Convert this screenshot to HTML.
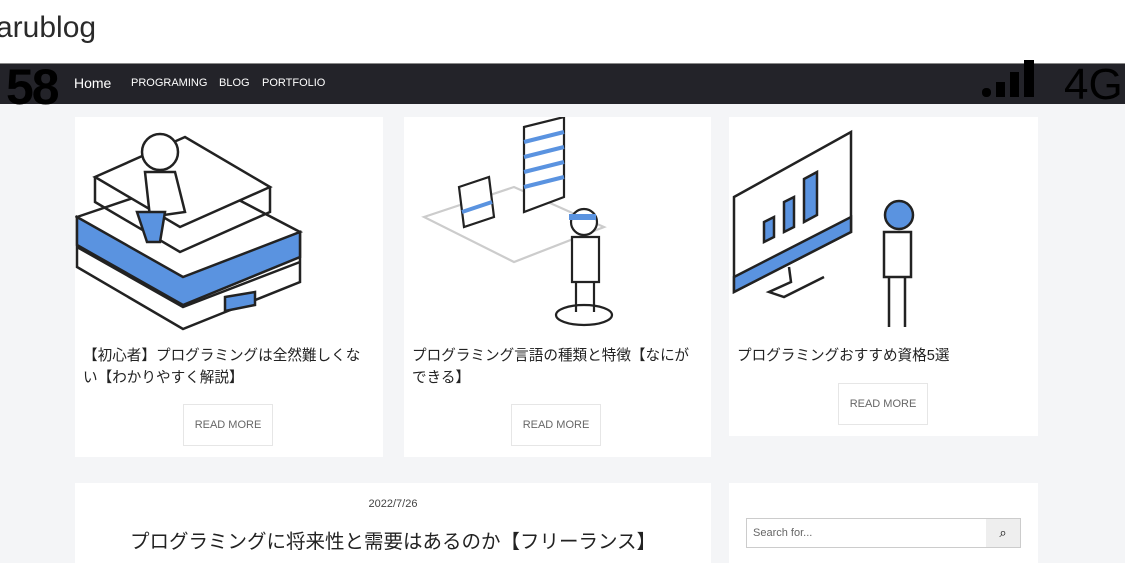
<!DOCTYPE html>
<html><head><meta charset="utf-8"><style>
*{margin:0;padding:0;box-sizing:border-box}
body{width:1125px;height:543px;overflow:hidden;background:#f4f5f7;font-family:"Liberation Sans","Noto Sans CJK JP",sans-serif;position:relative}
.top{position:absolute;left:0;top:0;width:1125px;height:63px;background:#fff}
.logo{position:absolute;left:-4px;top:11px;font-size:30px;color:#2a2a2a}
.nav{position:absolute;left:0;top:63px;width:1125px;height:41px;background:#232329;border-top:1px solid #888}
.nav .n58{position:absolute;left:6px;top:-6px;font-size:50px;color:#000;font-weight:bold;letter-spacing:-2px}
.nav .m{position:absolute;top:13px;color:#fff;font-size:11px}
.g4{position:absolute;left:1064px;top:-4px;font-size:44px;color:#000}
.card{position:absolute;background:#fff}
.t{position:absolute;left:8px;font-size:14.6px;line-height:22px;color:#222}
.btn{position:absolute;width:90px;height:42px;border:1px solid #e6e6e6;font-size:11px;color:#666;text-align:center;line-height:40px}
svg{position:absolute}
</style></head><body>
<div class="top"><div class="logo">arublog</div></div>
<div class="nav"><div class="n58">58</div>
<span class="m" style="left:74px;font-size:14px;top:11px">Home</span>
<span class="m" style="left:131px">PROGRAMING</span>
<span class="m" style="left:219px">BLOG</span>
<span class="m" style="left:262px">PORTFOLIO</span>
<svg style="left:982px;top:-6px" width="66" height="44"><rect x="0" y="30" width="9" height="9" rx="4" fill="#000"/><rect x="14" y="24" width="9" height="15" fill="#000"/><rect x="28" y="14" width="9" height="25" fill="#000"/><rect x="42" y="2" width="10" height="37" fill="#000"/></svg>
<div class="g4">4G</div></div>

<div class="card" style="left:75px;top:117px;width:308px;height:340px">
<svg width="308" height="220" viewBox="0 0 308 220" fill="none" stroke="#222" stroke-width="2.5">
<path d="M2 100 L120 60 L225 115 L108 160 Z" fill="#fff"/><path d="M2 100 L2 150 L108 212 L225 165 L225 115" fill="#fff"/><path d="M2 130 L108 190 L225 145"/>
<path d="M2 100 L108 160 L225 115 L225 140 L108 188 L2 128Z" fill="#5a93e0"/>
<path d="M20 60 L110 20 L195 70 L105 110Z" fill="#fff"/><path d="M20 60 L20 85 L105 135 L195 95 L195 70"/>
<path d="M150 180 L180 175 L180 188 L150 194Z" fill="#5a93e0"/>
<circle cx="85" cy="35" r="18" fill="#fff"/><path d="M70 55 L100 55 L110 95 L75 100Z" fill="#fff"/><path d="M62 95 L90 95 L85 125 L72 125Z" fill="#5a93e0"/>
</svg>
<div class="t" style="top:228px">【初心者】プログラミングは全然難しくな<br>い【わかりやすく解説】</div>
<div class="btn" style="left:108px;top:287px">READ MORE</div></div>

<div class="card" style="left:404px;top:117px;width:307px;height:340px">
<svg width="307" height="220" viewBox="0 0 307 220" fill="none" stroke="#222" stroke-width="2.2">
<path d="M20 100 L110 70 L200 110 L110 145Z" stroke="#ccc"/><path d="M120 10 L160 0 L160 80 L120 95Z" fill="#fff"/><path d="M120 25 L160 15 M120 40 L160 30 M120 55 L160 45 M120 70 L160 60" stroke="#5a93e0" stroke-width="4"/>
<path d="M55 70 L85 60 L90 100 L60 110Z" fill="#fff"/><path d="M58 95 L88 85" stroke="#5a93e0" stroke-width="4"/>
<circle cx="180" cy="105" r="13" fill="#fff"/><path d="M165 100 L192 100" stroke="#5a93e0" stroke-width="6"/>
<path d="M168 120 L195 120 L195 165 L168 165Z" fill="#fff"/><path d="M172 165 L172 195 M190 165 L190 195"/><ellipse cx="180" cy="198" rx="28" ry="10"/>
</svg>
<div class="t" style="top:228px">プログラミング言語の種類と特徴【なにが<br>できる】</div>
<div class="btn" style="left:107px;top:287px">READ MORE</div></div>

<div class="card" style="left:729px;top:117px;width:309px;height:319px">
<svg width="309" height="220" viewBox="0 0 309 220" fill="none" stroke="#222" stroke-width="2.5">
<path d="M5 80 L122 15 L122 115 L5 175Z" fill="#fff"/><path d="M5 160 L122 100 L122 115 L5 175Z" fill="#5a93e0"/>
<path d="M35 125 L45 120 L45 100 L35 105Z M55 115 L65 110 L65 80 L55 85Z M75 105 L88 98 L88 55 L75 62Z" fill="#5a93e0"/>
<path d="M60 150 L62 165 L40 175 L55 180 L95 160"/>
<circle cx="170" cy="98" r="14" fill="#5a93e0"/><path d="M155 115 L182 115 L182 160 L155 160Z M160 160 L160 210 M176 160 L176 210" fill="#fff"/>
</svg>
<div class="t" style="top:228px">プログラミングおすすめ資格5選</div>
<div class="btn" style="left:109px;top:266px">READ MORE</div></div>

<div class="card" style="left:75px;top:483px;width:636px;height:80px">
<div style="position:absolute;left:0;width:636px;top:15px;text-align:center;font-size:11px;color:#444">2022/7/26</div>
<div style="position:absolute;left:0;width:636px;top:42px;text-align:center;font-size:19.5px;color:#222">プログラミングに将来性と需要はあるのか【フリーランス】</div></div>
<div class="card" style="left:729px;top:483px;width:309px;height:80px">
<div style="position:absolute;left:17px;top:35px;width:275px;height:30px;border:1px solid #ccc"><span style="position:absolute;left:6px;top:8px;font-size:11px;color:#666">Search for...</span><div style="position:absolute;right:0;top:0;width:34px;height:28px;background:#eee;text-align:center;line-height:28px;font-size:13px">⌕</div></div></div>
</body></html>
